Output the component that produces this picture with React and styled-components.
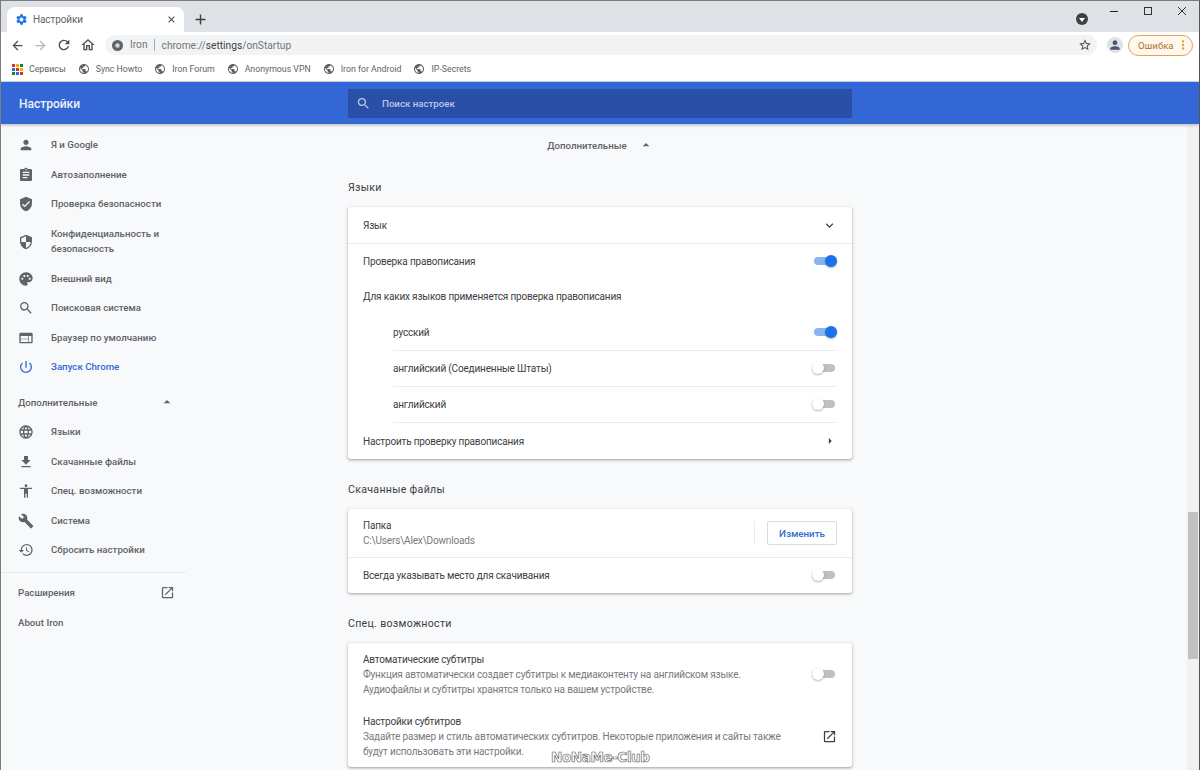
import styled, { createGlobalStyle } from "styled-components";
import {
  MdPerson, MdAssignment, MdVerifiedUser, MdSecurity, MdPalette, MdSearch, MdWeb,
  MdPowerSettingsNew, MdLanguage, MdFileDownload, MdAccessibility, MdBuild, MdRestore,
  MdOpenInNew, MdExpandMore, MdArrowDropUp, MdArrowRight, MdSettings, MdClose, MdAdd,
  MdArrowBack, MdArrowForward, MdRefresh, MdOutlineHome, MdStarBorder, MdPublic, MdMoreVert,
} from "react-icons/md";

const GlobalStyle = createGlobalStyle`
  html, body { margin: 0; padding: 0; height: 100%; overflow: hidden; }
  body { font-family: Roboto, "Liberation Sans", sans-serif; background: #f8f9fa; }
  * { box-sizing: border-box; }
`;

const Win = styled.div`
  position: relative;
  width: 1200px;
  height: 770px;
  display: flex;
  flex-direction: column;
  overflow: hidden;
  border-top: 1px solid #7d7d7d;
  border-left: 1px solid #7d7d7d;
  border-right: 1px solid #555;
  background: #f8f9fa;
`;

const TabStrip = styled.div`
  height: 31px;
  flex: none;
  display: flex;
  align-items: flex-end;
  background: #dee1e6;
  padding-left: 6px;
`;

const Tab = styled.div`
  width: 177px;
  height: 25px;
  background: #fff;
  border-radius: 8px 8px 0 0;
  display: flex;
  align-items: center;
  padding: 0 7px 0 8px;
  color: #5f6368;
  font-size: 10px;
  letter-spacing: -0.1px;
  gap: 5px;
`;

const TabTitle = styled.span`
  flex: 1;
`;

const NewTab = styled.div`
  width: 32px;
  height: 25px;
  display: flex;
  align-items: center;
  justify-content: center;
  color: #3c4043;
`;

const WinControls = styled.div`
  margin-left: auto;
  height: 100%;
  display: flex;
  align-items: flex-start;
  color: #333;
`;

const ProfileDot = styled.div`
  width: 12px;
  height: 12px;
  margin: 12px 9px 0 0;
  border-radius: 50%;
  background: #3c4043;
  display: flex;
  align-items: center;
  justify-content: center;
  &::after {
    content: "";
    border-left: 3px solid transparent;
    border-right: 3px solid transparent;
    border-top: 4px solid #fff;
    margin-top: 1px;
  }
`;

const WinBtn = styled.div`
  width: 34px;
  height: 20px;
  display: flex;
  align-items: center;
  justify-content: center;
`;

const MinLine = styled.div`
  width: 8px;
  height: 1px;
  background: #222;
`;

const MaxBox = styled.div`
  width: 8px;
  height: 8px;
  border: 1px solid #333;
`;

const Toolbar = styled.div`
  height: 26px;
  flex: none;
  background: #fff;
  display: flex;
  align-items: center;
  padding: 0 6px 0 9px;
  color: #5f6368;
`;

const NavIcons = styled.div`
  display: flex;
  align-items: center;
  gap: 8px;
  width: 95px;
  color: #4a4d51;
`;

const NavFaded = styled.span`
  display: flex;
  color: #b4b7ba;
`;

const Omnibox = styled.div`
  width: 992px;
  height: 20px;
  border-radius: 10px;
  background: #f1f3f4;
  display: flex;
  align-items: center;
  padding: 0 5px 0 7px;
  font-size: 10.2px;
  color: #70757a;
`;

const SiteChip = styled.span`
  margin-left: 7px;
  padding-right: 6px;
  margin-right: 7px;
  line-height: 12px;
  border-right: 1px solid #aaa;
`;

const Dark = styled.span`
  color: #3c4043;
`;

const Spring = styled.div`
  flex: 1;
`;

const Avatar = styled.div`
  width: 16px;
  height: 16px;
  margin: 0 5px 0 10px;
  border-radius: 50%;
  background: #dee1e6;
  display: flex;
  align-items: center;
  justify-content: center;
  color: #4a5570;
`;

const ErrorPill = styled.div`
  width: 65px;
  height: 21px;
  border: 1px solid #e2a24e;
  border-radius: 11px;
  background: #fef8ee;
  color: #b0702a;
  font-size: 9.6px;
  display: flex;
  align-items: center;
  padding: 0 2px 0 9px;
  justify-content: space-between;
`;

const BookmarkBar = styled.div`
  height: 24px;
  flex: none;
  background: #fff;
  display: flex;
  align-items: center;
  padding: 0 0 1px 11px;
  gap: 12px;
  font-size: 8.75px;
  color: #5f6368;
  border-bottom: 1px solid #cfd8ea;
`;

const Bookmark = styled.div`
  display: flex;
  align-items: center;
  gap: 6px;
  color: #5f6368;
`;

const HeaderBar = styled.header`
  height: 42px;
  flex: none;
  display: flex;
  align-items: center;
  background: #3367d6;
  box-shadow: 0 1px 3px rgba(60, 64, 67, 0.4);
  color: #fff;
  position: relative;
  z-index: 2;
`;

const HeaderTitle = styled.div`
  width: 347px;
  padding: 1px 0 0 18px;
  font-size: 12px;
  font-weight: 500;
  color: #eef2fb;
`;

const SearchBox = styled.div`
  width: 504px;
  height: 29px;
  background: #2a4fa6;
  display: flex;
  align-items: center;
  padding-left: 8px;
  gap: 11px;
  font-size: 9.7px;
  font-weight: 500;
  color: #b9c8e8;
`;

const Body = styled.div`
  flex: 1;
  min-height: 0;
  display: flex;
`;

const Sidebar = styled.nav`
  width: 185px;
  flex: none;
  padding-top: 6.5px;
  font-size: 9.7px;
  font-weight: 500;
  color: #5f6368;
`;

const NavItem = styled.div`
  min-height: 29.5px;
  display: flex;
  align-items: center;
  padding: ${(p) => (p.$tall ? "8px" : "0")} 0 ${(p) => (p.$tall ? "8px" : "0")} 17px;
  gap: 17px;
  line-height: 14.5px;
  color: ${(p) => (p.$active ? "#3367d6" : "#5f6368")};
`;

const NavSection = styled.div`
  height: 31px;
  margin-top: 4.5px;
  display: flex;
  align-items: center;
  justify-content: space-between;
  padding: 0 11px 0 17px;
`;

const Divider = styled.div`
  height: 1px;
  background: #e8eaed;
  margin: 6.5px 0 5.5px;
`;

const NavLink = styled.div`
  height: 29.5px;
  display: flex;
  align-items: center;
  justify-content: space-between;
  padding: 0 11px 0 17px;
`;

const Main = styled.main`
  flex: 1;
  padding: 6px 0 0 162px;
  color: #3c4043;
`;

const Column = styled.div`
  width: 504px;
`;

const Advanced = styled.div`
  height: 30px;
  display: flex;
  align-items: center;
  justify-content: center;
  gap: 11px;
  padding-left: 1px;
  font-size: 9.7px;
  font-weight: 500;
  color: #5f6368;
`;

const SectionTitle = styled.h2`
  margin: 0;
  height: ${(p) => p.$h}px;
  padding-top: ${(p) => p.$top}px;
  font-size: 10.6px;
  font-weight: 400;
  letter-spacing: 0.3px;
  color: #3c4043;
`;

const Card = styled.section`
  background: #fff;
  border-radius: 3px;
  box-shadow: 0 1px 2px rgba(60, 64, 67, 0.3), 0 1px 3px 1px rgba(60, 64, 67, 0.15);
`;

const Row = styled.div`
  height: ${(p) => p.$h || 36}px;
  display: flex;
  align-items: center;
  justify-content: space-between;
  margin-left: ${(p) => (p.$indent ? 45 : 15)}px;
  padding-right: 15px;
  font-size: 10px;
  letter-spacing: -0.17px;
  color: #3c4043;
  border-top: ${(p) => (p.$line ? "1px solid #ececee" : "none")};
  border-bottom: ${(p) => (p.$lineBottom ? "1px solid #ececee" : "none")};
`;

const LineRow = styled(Row)`
  margin-left: 0;
  padding-left: 15px;
`;

const IndentRow = styled(Row)`
  margin-right: 15px;
  padding-right: 0;
`;

const Stack = styled.div`
  line-height: 15px;
`;

const Sub = styled.div`
  color: #757a80;
`;

const Track = styled.div`
  position: relative;
  width: 23px;
  height: 8px;
  margin: 0 ${(p) => (p.$on ? 0 : 2)}px 1px 0;
  border-radius: 4px;
  background: ${(p) => (p.$on ? "#8ab4f0" : "#bdc1c6")};
`;

const Thumb = styled.div`
  position: absolute;
  top: -2px;
  ${(p) => (p.$on ? "right: 0;" : "left: 0;")}
  width: 12px;
  height: 12px;
  border-radius: 50%;
  background: ${(p) => (p.$on ? "#1a73e8" : "#fff")};
  box-shadow: 0 1px 2px rgba(60, 64, 67, 0.4);
`;

const ButtonCell = styled.div`
  display: flex;
  align-items: center;
  height: 24px;
  padding-left: 12px;
  border-left: 1px solid #ececee;
`;

const ChangeButton = styled.button`
  width: 70px;
  height: 24px;
  background: #fff;
  border: 1px solid #dadce0;
  border-radius: 2px;
  color: #2f6fd0;
  font: 500 9.8px Roboto, "Liberation Sans", sans-serif;
`;

const Scrollbar = styled.div`
  position: absolute;
  top: 124px;
  right: 0;
  bottom: 0;
  width: 12px;
  background: #f1f1f1;
`;

const ScrollThumb = styled.div`
  position: absolute;
  top: 387px;
  left: 1px;
  width: 10px;
  height: 147px;
  background: #c1c1c1;
`;

const Watermark = styled.div`
  position: absolute;
  left: 550px;
  top: 748px;
  font: 700 13.5px "DejaVu Sans", sans-serif;
  letter-spacing: -0.4px;
  color: #fff;
  -webkit-text-stroke: 0.6px #555;
`;

function AppsIcon() {
  const colors = ["#d93025", "#f9ab00", "#188038", "#1a73e8", "#d93025", "#f9ab00", "#188038", "#1a73e8", "#d93025"];
  return (
    <svg width="11" height="11" viewBox="0 0 11 11">
      {colors.map((c, i) => (
        <rect key={i} x={(i % 3) * 4} y={Math.floor(i / 3) * 4} width="3" height="3" fill={c} />
      ))}
    </svg>
  );
}

function SiteIcon() {
  return (
    <svg width="11" height="11" viewBox="0 0 12 12">
      <circle cx="6" cy="6" r="6" fill="#5f6368" />
      <circle cx="6" cy="6" r="2.4" fill="#d5d7da" />
    </svg>
  );
}

function ThinClose() {
  return (
    <svg width="10" height="10" viewBox="0 0 10 10">
      <path d="M1 1l8 8M9 1l-8 8" stroke="#333" strokeWidth="1" fill="none" />
    </svg>
  );
}

function Toggle({ on }) {
  return (
    <Track $on={on}>
      <Thumb $on={on} />
    </Track>
  );
}

const navTop = [
  [MdPerson, "Я и Google"],
  [MdAssignment, "Автозаполнение"],
  [MdVerifiedUser, "Проверка безопасности"],
  [MdSecurity, "Конфиденциальность и безопасность", true],
  [MdPalette, "Внешний вид"],
  [MdSearch, "Поисковая система"],
  [MdWeb, "Браузер по умолчанию"],
];

const navAdvanced = [
  [MdLanguage, "Языки"],
  [MdFileDownload, "Скачанные файлы"],
  [MdAccessibility, "Спец. возможности"],
  [MdBuild, "Система"],
  [MdRestore, "Сбросить настройки"],
];

const bookmarks = ["Sync Howto", "Iron Forum", "Anonymous VPN", "Iron for Android", "IP-Secrets"];

export default function App() {
  return (
    <Win>
      <GlobalStyle />
      <TabStrip>
        <Tab>
          <MdSettings size={13} color="#1a73e8" />
          <TabTitle>Настройки</TabTitle>
          <MdClose size={11} color="#3c4043" />
        </Tab>
        <NewTab>
          <MdAdd size={17} />
        </NewTab>
        <WinControls>
          <ProfileDot />
          <WinBtn><MinLine /></WinBtn>
          <WinBtn><MaxBox /></WinBtn>
          <WinBtn><ThinClose /></WinBtn>
        </WinControls>
      </TabStrip>
      <Toolbar>
        <NavIcons>
          <MdArrowBack size={15} />
          <NavFaded><MdArrowForward size={15} /></NavFaded>
          <MdRefresh size={16} />
          <MdOutlineHome size={16} />
        </NavIcons>
        <Omnibox>
          <SiteIcon />
          <SiteChip>Iron</SiteChip>
          <span>chrome://<Dark>settings</Dark>/onStartup</span>
          <Spring />
          <MdStarBorder size={14} color="#4a4d51" />
        </Omnibox>
        <Avatar><MdPerson size={14} /></Avatar>
        <ErrorPill>
          Ошибка
          <MdMoreVert size={14} color="#e0a030" />
        </ErrorPill>
      </Toolbar>
      <BookmarkBar>
        <Bookmark><AppsIcon />Сервисы</Bookmark>
        {bookmarks.map((b) => (
          <Bookmark key={b}><MdPublic size={12} color="#5f6368" />{b}</Bookmark>
        ))}
      </BookmarkBar>
      <HeaderBar>
        <HeaderTitle>Настройки</HeaderTitle>
        <SearchBox>
          <MdSearch size={15} />
          Поиск настроек
        </SearchBox>
      </HeaderBar>
      <Body>
        <Sidebar>
          {navTop.map(([Icon, label, tall]) => (
            <NavItem key={label} $tall={tall}>
              <Icon size={16} style={{ flex: "none" }} />
              <span>{label}</span>
            </NavItem>
          ))}
          <NavItem $active>
            <MdPowerSettingsNew size={16} />
            <span>Запуск Chrome</span>
          </NavItem>
          <NavSection>
            Дополнительные
            <MdArrowDropUp size={16} />
          </NavSection>
          {navAdvanced.map(([Icon, label]) => (
            <NavItem key={label}>
              <Icon size={16} />
              <span>{label}</span>
            </NavItem>
          ))}
          <Divider />
          <NavLink>
            Расширения
            <MdOpenInNew size={15} />
          </NavLink>
          <NavLink>About Iron</NavLink>
        </Sidebar>
        <Main>
          <Column>
            <Advanced>
              Дополнительные
              <MdArrowDropUp size={16} />
            </Advanced>
            <SectionTitle $h={47} $top={21}>Языки</SectionTitle>
            <Card>
              <Row>
                Язык
                <MdExpandMore size={15} />
              </Row>
              <LineRow $line>
                Проверка правописания
                <Toggle on />
              </LineRow>
              <Row $h={35.5}>Для каких языков применяется проверка правописания</Row>
              <IndentRow $indent $h={35}>
                русский
                <Toggle on />
              </IndentRow>
              <IndentRow $indent $line $h={36.3}>
                английский (Соединенные Штаты)
                <Toggle />
              </IndentRow>
              <IndentRow $indent $line $lineBottom $h={37.5}>
                английский
                <Toggle />
              </IndentRow>
              <Row $h={36}>
                Настроить проверку правописания
                <MdArrowRight size={14} />
              </Row>
            </Card>
            <SectionTitle $h={50} $top={24}>Скачанные файлы</SectionTitle>
            <Card>
              <Row $h={48}>
                <Stack>
                  <div>Папка</div>
                  <Sub>C:\Users\Alex\Downloads</Sub>
                </Stack>
                <ButtonCell>
                  <ChangeButton>Изменить</ChangeButton>
                </ButtonCell>
              </Row>
              <LineRow $line>
                Всегда указывать место для скачивания
                <Toggle />
              </LineRow>
            </Card>
            <SectionTitle $h={50} $top={24}>Спец. возможности</SectionTitle>
            <Card>
              <Row $h={62}>
                <Stack>
                  <div>Автоматические субтитры</div>
                  <Sub>Функция автоматически создает субтитры к медиаконтенту на английском языке.</Sub>
                  <Sub>Аудиофайлы и субтитры хранятся только на вашем устройстве.</Sub>
                </Stack>
                <Toggle />
              </Row>
              <Row $h={62}>
                <Stack>
                  <div>Настройки субтитров</div>
                  <Sub>Задайте размер и стиль автоматических субтитров. Некоторые приложения и сайты также</Sub>
                  <Sub>будут использовать эти настройки.</Sub>
                </Stack>
                <MdOpenInNew size={15} />
              </Row>
            </Card>
          </Column>
        </Main>
      </Body>
      <Scrollbar>
        <ScrollThumb />
      </Scrollbar>
      <Watermark>NoNaMe-Club</Watermark>
    </Win>
  );
}
